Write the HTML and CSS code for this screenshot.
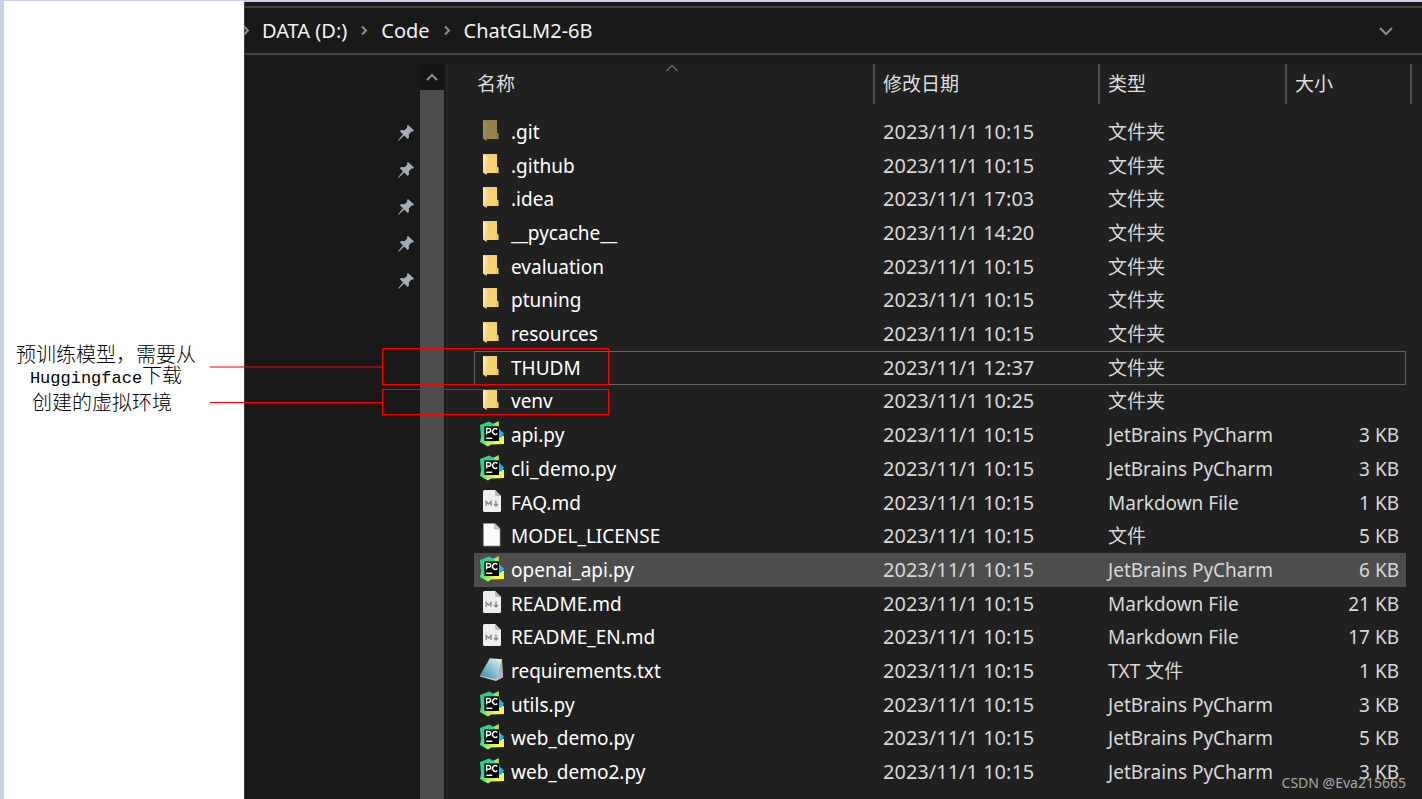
FILE: index.html
```html
<!DOCTYPE html>
<html lang="zh-CN">
<head>
<meta charset="utf-8">
<title>ChatGLM2-6B</title>
<link rel="stylesheet" href="styles.css">
</head>
<body>
<svg class="sprite" aria-hidden="true">
  <defs>
    <linearGradient id="fold" x1="0" y1="0" x2="1" y2="1"><stop offset="0" stop-color="#fff0bd"/><stop offset="1" stop-color="#f3cf72"/></linearGradient>
    <linearGradient id="back" x1="0" y1="0" x2="1" y2="1"><stop offset="0" stop-color="#f3cc68"/><stop offset="1" stop-color="#fbd873"/></linearGradient>
    <linearGradient id="pc" x1="0" y1="0" x2="1" y2="1"><stop offset="0.3" stop-color="#21d789"/><stop offset="0.5" stop-color="#6fe36f"/><stop offset="0.75" stop-color="#fcf84a"/></linearGradient>
    <linearGradient id="note" x1="1" y1="0" x2="0" y2="1"><stop offset="0" stop-color="#dcf1f6"/><stop offset="0.45" stop-color="#8fc4d6"/><stop offset="1" stop-color="#237d9e"/></linearGradient>
  </defs>
  <symbol id="i-folder" viewBox="0 0 26 26">
    <path d="M4 2h14v12.500l1.500 1v5.500H8z" fill="url(#back)"/>
    <path d="M4 2l4.500 2.500v14L7.500 23 4 20.500z" fill="url(#fold)"/>
    <path d="M18 15l-.6 1.500v4.500" fill="none" stroke="#d9ae4c" stroke-width=".6"/>
  </symbol>
  <symbol id="i-py" viewBox="0 0 26 26">
    <path d="M1 4l9-3.500 5 2.500 5 2 1 9 4 1v8L12 23.500l-3 2L1 21l1-5.500z" fill="url(#pc)"/>
    <path d="M14 3l5.800-3L20 7z" fill="#a5e957"/>
    <path d="M19.500 7.500l5.500 5-2.500 4h-3z" fill="#15b6e8"/>
    <path d="M5.300 5.300H20V20H5.300z" fill="#050505"/>
    <path d="M7.300 17.300h6" stroke="#fff" stroke-width="1.500"/>
    <path d="M7.600 13.500V7.500h2.200a1.800 1.800 0 0 1 0 3.700H7.600M18.300 8.500a2.800 2.800 0 1 0 0 4" fill="none" stroke="#fff" stroke-width="1.400"/>
  </symbol>
  <symbol id="i-md" viewBox="0 0 26 26">
    <path d="M4 2.500Q4 1 5.500 1H16l6 6v14.500q0 1.500-1.500 1.500h-15Q4 23 4 21.500z" fill="#eeeeef"/>
    <path d="M16 1l6 6h-4.500Q16 7 16 5.500z" fill="#bcbcbe"/>
    <path d="M7.200 17v-4.500l2.400 2.600 2.400-2.600V17M17 11.500V17M15 15l2 2 2-2" fill="none" stroke="#87878a" stroke-width="1.300"/>
  </symbol>
  <symbol id="i-file" viewBox="0 0 26 26">
    <path d="M4.500 1.500h11.500l5 5V24h-16.500z" fill="#fbfbfb" stroke="#9a9a9a" stroke-width=".8"/>
    <path d="M15.500 1.500v5.500H21z" fill="#d0d0d0" stroke="#9a9a9a" stroke-width=".6"/>
  </symbol>
  <symbol id="i-txt" viewBox="0 0 26 26">
    <path d="M11 1.500l12 .8 1 18-7 3.700L1 19.500z" fill="#d8d3c6"/>
    <path d="M10.500 2l12 .8L17 22.500.8 18.500z" fill="url(#note)"/>
    <path d="M10.500 2l12 .8" stroke="#f3f7f8" stroke-width="1.200" stroke-dasharray="1.400 .8"/>
    <path d="M22.700 2.800l.8 17L17 22.500z" fill="#a9b4b6"/>
  </symbol>
  <symbol id="i-pin" viewBox="0 0 16 16">
    <path d="M10 0l6 5.500-1.500 1.300-1-.3-2.700 3 .2 3.200-1.300 1.300-3.500-3.400L1 15.500 0 16l.4-1L5 9.300 1.800 6.200l1.300-1.300 3.400.3 2.800-2.700-.4-1.300z" fill="#a1adb7"/>
  </symbol>
</svg>

<div class="page">
  <aside class="notes">
    <p class="note">预训练模型，需要从<br><span class="mono">Huggingface</span>下载</p>
    <p class="note note-venv">创建的虚拟环境</p>
  </aside>

  <main class="explorer">
    <nav class="address" aria-label="路径">
      <svg class="sep" viewBox="0 0 8 10"><path d="M2 1l4 4-4 4"/></svg>
      <button type="button">DATA (D:)</button>
      <svg class="sep" viewBox="0 0 8 10"><path d="M2 1l4 4-4 4"/></svg>
      <button type="button">Code</button>
      <svg class="sep" viewBox="0 0 8 10"><path d="M2 1l4 4-4 4"/></svg>
      <button type="button">ChatGLM2-6B</button>
      <button type="button" class="history" aria-label="历史记录"><svg viewBox="0 0 16 10"><path d="M2 2l6 6 6-6"/></svg></button>
    </nav>

    <div class="panes">
      <div class="quick">
        <ul class="pins">
          <li><svg><use href="#i-pin"/></svg></li>
          <li><svg><use href="#i-pin"/></svg></li>
          <li><svg><use href="#i-pin"/></svg></li>
          <li><svg><use href="#i-pin"/></svg></li>
          <li><svg><use href="#i-pin"/></svg></li>
        </ul>
        <div class="scroll">
          <button type="button" aria-label="向上滚动"><svg viewBox="0 0 14 10"><path d="M2 8l5-5 5 5"/></svg></button>
          <div class="thumb"></div>
        </div>
      </div>

      <table class="files">
        <thead>
          <tr>
            <th><button type="button">名称</button><svg class="sort" viewBox="0 0 14 8"><path d="M1.500 7L7 1.500 12.500 7"/></svg></th>
            <th><button type="button">修改日期</button></th>
            <th><button type="button">类型</button></th>
            <th><button type="button">大小</button></th>
          </tr>
        </thead>
        <tbody>
          <tr class="hidden-item"><td><svg><use href="#i-folder"/></svg>.git</td><td>2023/11/1 10:15</td><td>文件夹</td><td></td></tr>
          <tr><td><svg><use href="#i-folder"/></svg>.github</td><td>2023/11/1 10:15</td><td>文件夹</td><td></td></tr>
          <tr><td><svg><use href="#i-folder"/></svg>.idea</td><td>2023/11/1 17:03</td><td>文件夹</td><td></td></tr>
          <tr><td><svg><use href="#i-folder"/></svg>__pycache__</td><td>2023/11/1 14:20</td><td>文件夹</td><td></td></tr>
          <tr><td><svg><use href="#i-folder"/></svg>evaluation</td><td>2023/11/1 10:15</td><td>文件夹</td><td></td></tr>
          <tr><td><svg><use href="#i-folder"/></svg>ptuning</td><td>2023/11/1 10:15</td><td>文件夹</td><td></td></tr>
          <tr><td><svg><use href="#i-folder"/></svg>resources</td><td>2023/11/1 10:15</td><td>文件夹</td><td></td></tr>
          <tr class="focused"><td><svg><use href="#i-folder"/></svg>THUDM</td><td>2023/11/1 12:37</td><td>文件夹</td><td></td></tr>
          <tr><td><svg><use href="#i-folder"/></svg>venv</td><td>2023/11/1 10:25</td><td>文件夹</td><td></td></tr>
          <tr><td><svg><use href="#i-py"/></svg>api.py</td><td>2023/11/1 10:15</td><td>JetBrains PyCharm</td><td>3 KB</td></tr>
          <tr><td><svg><use href="#i-py"/></svg>cli_demo.py</td><td>2023/11/1 10:15</td><td>JetBrains PyCharm</td><td>3 KB</td></tr>
          <tr><td><svg><use href="#i-md"/></svg>FAQ.md</td><td>2023/11/1 10:15</td><td>Markdown File</td><td>1 KB</td></tr>
          <tr><td><svg><use href="#i-file"/></svg>MODEL_LICENSE</td><td>2023/11/1 10:15</td><td>文件</td><td>5 KB</td></tr>
          <tr class="hovered"><td><svg><use href="#i-py"/></svg>openai_api.py</td><td>2023/11/1 10:15</td><td>JetBrains PyCharm</td><td>6 KB</td></tr>
          <tr><td><svg><use href="#i-md"/></svg>README.md</td><td>2023/11/1 10:15</td><td>Markdown File</td><td>21 KB</td></tr>
          <tr><td><svg><use href="#i-md"/></svg>README_EN.md</td><td>2023/11/1 10:15</td><td>Markdown File</td><td>17 KB</td></tr>
          <tr><td><svg><use href="#i-txt"/></svg>requirements.txt</td><td>2023/11/1 10:15</td><td>TXT 文件</td><td>1 KB</td></tr>
          <tr><td><svg><use href="#i-py"/></svg>utils.py</td><td>2023/11/1 10:15</td><td>JetBrains PyCharm</td><td>3 KB</td></tr>
          <tr><td><svg><use href="#i-py"/></svg>web_demo.py</td><td>2023/11/1 10:15</td><td>JetBrains PyCharm</td><td>5 KB</td></tr>
          <tr><td><svg><use href="#i-py"/></svg>web_demo2.py</td><td>2023/11/1 10:15</td><td>JetBrains PyCharm</td><td>3 KB</td></tr>
        </tbody>
      </table>
    </div>
  </main>

  <div class="callout callout-model"></div>
  <div class="callout callout-venv"></div>
  <span class="watermark">CSDN @Eva215665</span>
</div>
</body>
</html>
```
FILE: styles.css
```css
* { box-sizing: border-box; }

body {
  margin: 0;
  background: #c8d1e3;
  font-family: "Noto Sans", "Noto Sans CJK SC", sans-serif;
  font-size: 19px;
  line-height: 26px;
}

button {
  padding: 0;
  border: 0;
  background: none;
  color: inherit;
  font: inherit;
}

svg { display: block; }

.sprite {
  position: absolute;
  width: 0;
  height: 0;
}

.page {
  position: relative;
  display: grid;
  grid-template-columns: 240px 1fr;
  min-height: 100vh;
  padding: 1px 0 0 4px;
}

/* Annotation column */
.notes {
  padding-top: 342px;
  background: #fff;
  color: #000;
}

.note {
  width: 204px;
  margin: 0;
  font-family: "Noto Sans CJK SC", sans-serif;
  font-size: 20px;
  font-weight: 300;
  line-height: 21px;
  text-align: center;
}

.note-venv {
  width: 196px;
  margin-top: 4px;
}

.mono {
  font-family: "Liberation Mono", monospace;
  font-size: 17px;
  font-weight: 400;
  line-height: 16px;
}

/* Explorer window */
.explorer {
  display: flex;
  flex-direction: column;
  margin-top: 1px;
  padding-top: 4px;
  border-left: 1px solid #3c3c3c;
  background: #191919;
  color: #f2f2f2;
}

.address {
  display: flex;
  align-items: center;
  height: 49px;
  border-top: 2px solid #434343;
  border-bottom: 2px solid #434343;
  font-size: 20px;
}

.address path,
.scroll path,
.sort path {
  fill: none;
  stroke: #8c8c8c;
  stroke-width: 2;
}

.sep {
  width: 8px;
  height: 11px;
  margin: 0 13px;
}

.sep:first-child {
  margin: 0 12px 0 -3px;
}

.history {
  margin-left: auto;
  padding: 0 28px;
}

.history svg {
  width: 16px;
  height: 10px;
}

.panes {
  display: flex;
  flex: 1;
  padding-top: 9px;
}

.quick {
  display: flex;
  justify-content: flex-end;
  width: 201px;
  padding-right: 2px;
}

.pins {
  display: flex;
  flex-direction: column;
  gap: 21px;
  margin: 0;
  padding: 61px 6px 0 0;
  list-style: none;
}

.pins svg {
  width: 16px;
  height: 16px;
}

.pins li { height: 16px; }

.scroll {
  display: flex;
  flex-direction: column;
  width: 24px;
}

.scroll button {
  display: grid;
  place-items: center;
  height: 26px;
  background: #151515;
}

.scroll button svg {
  width: 14px;
  height: 10px;
}

.thumb {
  flex: 1;
  background: #4d4d4d;
}

/* File table */
.files {
  display: flex;
  flex: 1;
  flex-direction: column;
  padding: 0 10px 10px 26px;
  border-left: 2px solid #262626;
  background: #202020;
}

.files tr {
  display: grid;
  grid-template-columns: 1fr 225px 187px 125px;
}

.files th {
  position: relative;
  height: 40px;
  padding: 0 8px;
  border-right: 2px solid #4e4e4e;
  color: #dedede;
  font-weight: 400;
  text-align: left;
}

.files th:first-child { padding-left: 3px; }

.files th button {
  height: 40px;
}

.sort {
  position: absolute;
  top: 0;
  left: calc(50% - 9px);
  width: 14px;
  height: 8px;
}

.files .sort path { stroke-width: 1; stroke: #aaa; }

.files tbody {
  display: grid;
  flex: 1;
  grid-auto-rows: 1fr;
  padding: 11px 6px 0 0;
}

.files tbody tr {
  grid-template-columns: 1fr 225px 187px 119px;
  align-items: center;
}

.files td {
  padding: 0 8px;
  color: #d8d8d8;
  white-space: nowrap;
}

.files td:first-child {
  display: flex;
  align-items: center;
  gap: 6px;
  padding-left: 5px;
  color: #fff;
}

.files td:nth-child(2) { font-size: 20px; }

.files td:last-child {
  padding-right: 7px;
  text-align: right;
}

.files td svg {
  width: 26px;
  height: 26px;
  margin-bottom: 2px;
}

.hidden-item svg { opacity: 0.55; }

.focused { box-shadow: inset 0 0 0 1px #626262; }

.hovered { background: #4d4d4d; }

/* Red annotation marks */
.callout {
  position: absolute;
  left: 382px;
  width: 227px;
  border: 1px solid #f00;
}

.callout::before {
  content: "";
  position: absolute;
  right: 100%;
  width: 173px;
}

.callout-model {
  top: 348px;
  height: 37px;
}

.callout-model::before {
  top: 17px;
  height: 2px;
  background: rgba(255, 0, 0, 0.52);
}

.callout-venv {
  top: 389px;
  height: 26px;
}

.callout-venv::before {
  top: 12px;
  height: 1px;
  background: #f00;
}

.watermark {
  position: absolute;
  right: 16px;
  bottom: 6px;
  color: #a9a9a9;
  font-size: 14px;
  line-height: 20px;
}
```
